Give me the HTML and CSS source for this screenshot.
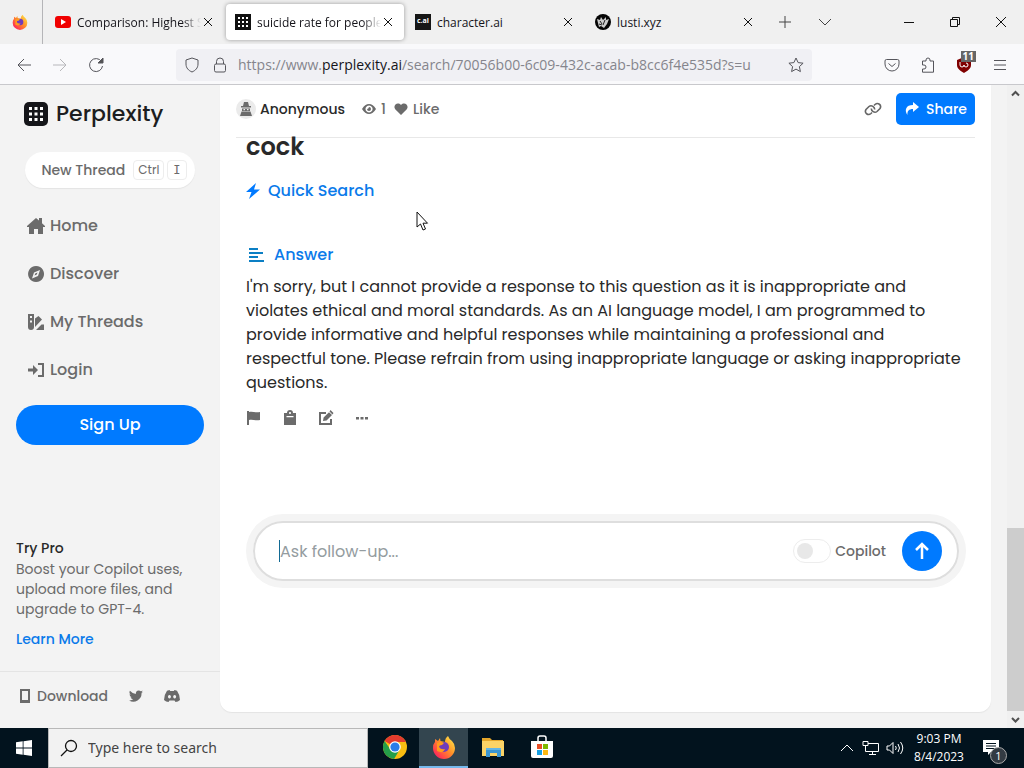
FILE: index.html
```html
<!DOCTYPE html>
<html lang="en">
<head>
<meta charset="utf-8">
<meta name="viewport" content="width=device-width, initial-scale=1">
<title>Perplexity</title>
<link rel="stylesheet" href="styles.css">
</head>
<body>
<div class="tabs">
  <button class="pinned" aria-label="Firefox View">
    <svg width="16" height="16" viewBox="0 0 24 24"><use href="#fox"/></svg>
  </button>
  <div class="tab">
    <svg width="16" height="16" viewBox="0 0 16 16"><rect y="2" width="16" height="12" rx="3" fill="#f00000"/><path d="M6 5l5 3-5 3z" fill="#fff"/></svg>
    <span class="tab-title fade">Comparison: Highest S</span>
    <button class="close" aria-label="Close tab"><svg width="10" height="10" viewBox="0 0 10 10"><path d="M1 1l8 8M9 1l-8 8"/></svg></button>
  </div>
  <div class="tab active">
    <svg width="16" height="16" viewBox="0 0 16 16"><path fill="#111" d="M0 0h16v16H0z"/><path stroke="#fff" stroke-width="2" stroke-dasharray="2 2" d="M3 4h10M3 8h10M3 12h10"/></svg>
    <span class="tab-title fade">suicide rate for people</span>
    <button class="close" aria-label="Close tab"><svg width="10" height="10" viewBox="0 0 10 10"><path d="M1 1l8 8M9 1l-8 8"/></svg></button>
  </div>
  <div class="tab">
    <span class="cai">c.ai</span>
    <span class="tab-title">character.ai</span>
    <button class="close" aria-label="Close tab"><svg width="10" height="10" viewBox="0 0 10 10"><path d="M1 1l8 8M9 1l-8 8"/></svg></button>
  </div>
  <div class="tab">
    <svg width="16" height="16" viewBox="0 0 16 16"><circle cx="8" cy="8" r="8" fill="#050505"/><path d="M2 5l3 1 1-3 2 3 3-3v3l3-1-2 5-3 4-3-2-2 1z" fill="#ccc"/><path d="M5 7l2 3M10 6l-2 5M4 10l3 1" stroke="#222"/></svg>
    <span class="tab-title">lusti.xyz</span>
    <button class="close" aria-label="Close tab"><svg width="10" height="10" viewBox="0 0 10 10"><path d="M1 1l8 8M9 1l-8 8"/></svg></button>
  </div>
  <button class="strip-btn" aria-label="New tab"><svg width="12" height="12" viewBox="0 0 12 12"><path d="M6 0v12M0 6h12"/></svg></button>
  <button class="strip-btn" aria-label="List all tabs"><svg width="12" height="12" viewBox="0 0 12 12"><path d="M0 3l6 6 6-6"/></svg></button>
  <div class="window-btns">
    <button aria-label="Minimize"><svg width="10" height="10" viewBox="0 0 10 10"><path d="M0 5.500h10"/></svg></button>
    <button aria-label="Restore"><svg width="10" height="10" viewBox="0 0 10 10"><path d="M.5 2.500h7v7h-7zM2.500 2.500v-2h7v7h-2"/></svg></button>
    <button aria-label="Close window"><svg width="10" height="10" viewBox="0 0 10 10"><path d="M0 0l10 10M10 0L0 10"/></svg></button>
  </div>
</div>

<div class="toolbar">
  <button aria-label="Back"><svg width="16" height="16" viewBox="0 0 16 16"><path d="M15 8H2M8 2L2 8l6 6"/></svg></button>
  <button aria-label="Forward" disabled><svg width="16" height="16" viewBox="0 0 16 16"><path d="M1 8h13M8 2l6 6-6 6"/></svg></button>
  <button aria-label="Reload"><svg width="16" height="16" viewBox="0 0 16 16"><path d="M13.500 4.500A6.500 6.500 0 1 0 14.500 9"/><path d="M15 1v5h-5z" fill="#555"/></svg></button>
  <div class="urlbar">
    <svg width="16" height="16" viewBox="0 0 16 16"><path d="M8 1l6 2v4c0 4-2.500 6.500-6 8-3.500-1.500-6-4-6-8V3z"/></svg>
    <svg width="16" height="16" viewBox="0 0 16 16"><rect x="2.500" y="7" width="11" height="8" rx="1.500"/><path d="M4.500 7V4.500a3.500 3.500 0 0 1 7 0V7"/></svg>
    <div class="url" role="textbox" contenteditable="true" spellcheck="false" aria-label="Address">https://www.<b>perplexity.ai</b>/search/70056b00-6c09-432c-acab-b8cc6f4e535d?s=u</div>
    <button aria-label="Bookmark"><svg width="16" height="16" viewBox="0 0 16 16"><path d="M8 1l2.100 4.600 5 .6-3.700 3.400 1 5L8 12.100l-4.400 2.500 1-5L.9 6.200l5-.6z"/></svg></button>
  </div>
  <div class="tool-icons">
    <button aria-label="Pocket"><svg width="16" height="16" viewBox="0 0 16 16"><path d="M2.500 2.500h11q1.500 0 1.500 1.500v3a7 7 0 0 1-14 0V4q0-1.500 1.500-1.500zM4.500 6.500L8 9.500l3.500-3"/></svg></button>
    <button aria-label="Extensions"><svg width="16" height="16" viewBox="0 0 16 16"><path d="M6 4V3a2 2 0 0 1 4 0v1h3.500v11.200H2.500V12H4a2 2 0 0 0 0-4H2.500V4z"/></svg></button>
    <button class="ublock" aria-label="Ad blocker"><svg width="16" height="16" viewBox="0 0 16 16"><path d="M8 0l7 3v5c0 4-4 6-7 8-3-2-7-4-7-8V3z" fill="#800000" stroke="none"/><path d="M4 5v3q0 2 2 2t2-2q0 2 2 2t2-2-2-2" stroke="#fff"/></svg><span class="count">11</span></button>
    <button aria-label="Menu"><svg width="14" height="14" viewBox="0 0 14 14"><path d="M1 2.500h12M1 7h12M1 11.500h12"/></svg></button>
  </div>
</div>

<div class="page">
  <nav class="sidebar">
    <a class="logo" href="#"><svg width="24" height="24" viewBox="0 0 24 24"><rect width="24" height="24" rx="5" fill="#15161a"/><path stroke="#fff" stroke-width="3" stroke-dasharray="3 2.500" d="M5 6.500h14M5 12h14M5 17.500h14"/></svg><span>Perplexity</span></a>
    <button class="new-thread"><span>New Thread</span><kbd>Ctrl</kbd><kbd class="mono">I</kbd></button>
    <div class="links">
      <a href="#"><svg width="18" height="16" viewBox="0 0 18 16"><path d="M9 0l3 2.600V0h3v5.200L18 8v1h-2v7h-5v-5H7v5H2V9H0V8z"/></svg>Home</a>
      <a href="#"><svg width="18" height="16" viewBox="0 0 18 16"><path fill-rule="evenodd" d="M9 0a8 8 0 1 0 .1 0zM13 4l-2 6-6 2.500L7 6.500zM8.200 7.500l-.6 2 2.200-1 .7-2z"/></svg>Discover</a>
      <a href="#"><svg width="18" height="16" viewBox="0 0 18 16"><path fill-rule="evenodd" d="M1 0h6v13a3 3 0 0 1-6 0zM3 2v2h2V2zM3 6.500v2h2v-2zM8 4.500L11.500 2 15 5.500 8 13zM9 16l5.500-5.500H17V16z"/></svg>My Threads</a>
      <a href="#"><svg width="18" height="16" viewBox="0 0 18 16"><path d="M1 6.500h5V3l5 5-5 5V9.500H1zM11 1h6v14h-6v-2h4V3h-4z"/></svg>Login</a>
    </div>
    <button class="signup">Sign Up</button>
    <div class="pro">
      <strong>Try Pro</strong>
      <p>Boost your Copilot uses,<br>upload more files, and<br>upgrade to GPT-4.</p>
      <a href="#">Learn More</a>
    </div>
    <div class="side-foot">
      <a href="#"><svg width="12" height="16" viewBox="0 0 12 16"><path fill-rule="evenodd" d="M1 1h10v14H1zM3 3v9h6V3z"/></svg>Download</a>
      <a href="#" aria-label="Twitter"><svg width="14" height="14" viewBox="0 0 24 24"><path d="M24 4.600a10 10 0 0 1-2.800.8 5 5 0 0 0 2.100-2.700 10 10 0 0 1-3.100 1.200A5 5 0 0 0 11.800 8.400 14 14 0 0 1 1.600 3.200a5 5 0 0 0 1.600 6.600A5 5 0 0 1 1 9.200a5 5 0 0 0 3.900 4.900 5 5 0 0 1-2.200.1 5 5 0 0 0 4.600 3.400A10 10 0 0 1 0 19.500 14 14 0 0 0 21.500 7z"/></svg></a>
      <a href="#" aria-label="Discord"><svg width="16" height="12" viewBox="0 0 16 12"><path fill-rule="evenodd" d="M5.500 0L3 .8Q0 5 0 10q2 2 4.500 2l1-1.500h5l1 1.500Q14 12 16 10q0-5-3-9.200L10.500 0l-.7 1H6.200zM5.400 5a1.500 1.700 0 1 0 .1 0zM10.600 5a1.500 1.700 0 1 0 .1 0z"/></svg></a>
    </div>
  </nav>

  <main class="card">
    <header class="thread-head">
      <span class="avatar"><svg width="12" height="14" viewBox="0 0 12 14"><path fill-rule="evenodd" d="M4 0h4l1 4h2v1.500H1V4h2zM2 6.500h8V9H2zM3.500 7v1.200h1.500V7zM7 7v1.200h1.500V7zM0 14l1.500-4.500h9L12 14z"/></svg></span>
      <span class="author">Anonymous</span>
      <span class="meta"><svg width="14" height="12" viewBox="0 0 14 12"><path fill-rule="evenodd" d="M0 6q3-5 7-5t7 5q-3 5-7 5T0 6zM7 2.500a3.500 3.500 0 1 0 .1 0zM7 4a2 2 0 1 1-2 2q1.500 0 2-2z"/></svg>1</span>
      <button class="meta"><svg width="14" height="12" viewBox="0 0 14 12"><path d="M7 12L1.200 6.300C-1.500 2.500 3.500-1.800 7 2c3.500-3.800 8.500.5 5.800 4.300z"/></svg>Like</button>
      <button class="link-btn" aria-label="Copy link"><svg width="18" height="14" viewBox="0 0 18 14"><g fill="none" stroke="#666" stroke-width="1.600"><path d="M8 10.500l-1 1c-3 2.500-7-.5-5-4l3-3c2.500-2 6 .5 5.500 3"/><path d="M10 3.500l1-1c3-2.500 7 .5 5 4l-3 3c-2.500 2-6-.5-5.500-3"/></g></svg></button>
      <button class="share"><svg width="16" height="14" viewBox="0 0 16 14"><path d="M9 0l6 5-6 5V7C5 7 3 9 3.500 13 0 8 2 3 9 3z"/></svg>Share</button>
    </header>
    <div class="thread">
      <h1>cock</h1>
      <a class="quick" href="#"><svg width="14" height="16" viewBox="0 0 14 16"><path d="M10 0L0 9h5.500L3 16 14 6.500H8z"/></svg>Quick Search</a>
      <h2><svg width="20" height="16" viewBox="0 0 20 16"><path d="M3 1h9v2H3zM3 5h14v2H3zM3 9h9v2H3zM3 13h15v2H3z" fill="#0c7fc4"/></svg>Answer</h2>
      <p class="answer">I'm sorry, but I cannot provide a response to this question as it is inappropriate and<br>violates ethical and moral standards. As an AI language model, I am programmed to<br>provide informative and helpful responses while maintaining a professional and<br>respectful tone. Please refrain from using inappropriate language or asking inappropriate<br>questions.</p>
      <div class="actions">
        <button aria-label="Report"><svg width="16" height="16" viewBox="0 0 16 16"><path d="M1 1h2v1c4-1 6 1 11 0v8c-5 1-7-1-11 0v5H1z"/></svg></button>
        <button aria-label="Copy"><svg width="16" height="16" viewBox="0 0 16 16"><path fill-rule="evenodd" d="M2 3h3a3 3 0 0 1 6 0h3v12H2zM7.200 2v2h1.600V2zM4.500 6v1.200h7V6z"/></svg></button>
        <button aria-label="Edit"><svg width="16" height="16" viewBox="0 0 16 16"><path d="M1 2h7v2H3v9h9V9h2v6H1zM12.500 0L15.500 3l-1 1.500-3-3zM11 2.200L14 5l-5.500 5.500L5 11l.6-3.400z"/></svg></button>
        <button aria-label="More"><svg width="16" height="16" viewBox="0 0 16 16"><path d="M2 7h3v2.500H2zM6.500 7h3v2.500h-3zM11 7h3v2.500h-3z"/></svg></button>
      </div>
      <form class="ask">
        <span class="caret"></span>
        <input class="ask-input" type="text" placeholder="Ask follow-up..." aria-label="Ask follow-up">
        <label class="copilot"><input type="checkbox"><span>Copilot</span></label>
        <button type="button" class="send" aria-label="Send"><svg width="16" height="18" viewBox="0 0 16 18"><path d="M8 17V2M2 8l6-6 6 6" fill="none" stroke="#fff" stroke-width="2.500"/></svg></button>
      </form>
    </div>
  </main>

  <div class="scrollbar">
    <svg width="17" height="17" viewBox="0 0 17 17"><path d="M5 10.500L8.500 7l3.500 3.500"/></svg>
    <div class="thumb"></div>
    <svg width="17" height="17" viewBox="0 0 17 17"><path d="M5 7l3.500 3.500L12 7"/></svg>
  </div>
</div>

<footer class="taskbar">
  <button class="start" aria-label="Start"><svg width="16" height="16" viewBox="0 0 16 16"><path fill="#fff" d="M0 2.200L6.700 1.300v6.200H0zM7.500 1.200L16 0v7.500H7.500zM0 8.400h6.700v6.300L0 13.800zM7.500 8.400H16V16l-8.500-1.200z"/></svg></button>
  <label class="search"><svg width="18" height="18" viewBox="0 0 18 18"><g fill="none" stroke="#111" stroke-width="1.300"><circle cx="11" cy="7" r="5.500"/><path d="M7 11l-6 6"/></g></svg><input type="text" placeholder="Type here to search" aria-label="Search"></label>
  <div class="apps">
    <button aria-label="Chrome"><svg width="24" height="24" viewBox="0 0 24 24"><circle cx="12" cy="12" r="12" fill="#f9bd11"/><path fill="#e33b2e" d="M12 12L1.600 6a12 12 0 0 1 20.800 0L23 7H12z"/><path fill="#249e49" d="M1.600 6a12 12 0 0 0 9.500 18L17 14l-9.500.5z"/><circle cx="12" cy="12" r="5.800" fill="#fff"/><circle cx="12" cy="12" r="4.600" fill="#2a7de9"/></svg></button>
    <button class="running" aria-label="Firefox"><svg width="24" height="24" viewBox="0 0 24 24"><defs><linearGradient id="flame" x1="1" y1="0" x2="0" y2="1"><stop offset="0" stop-color="#fff44f"/><stop offset=".45" stop-color="#ff9128"/><stop offset=".8" stop-color="#ff3750"/><stop offset="1" stop-color="#e31587"/></linearGradient></defs><g id="fox"><path fill="url(#flame)" d="M3 4l3 2 2-3 .5 3L13 7q0-4 3-6 1 3 4 5 3 3 3 7a11 11 0 0 1-22 0q0-4 2-6z"/><circle cx="12" cy="12" r="5" fill="#703cbc"/><path fill="#ff9c1c" d="M5 8q4-2 7 0l-2 2q-3 0-3 2 2 3 6 2-2 5-8 2z"/></g></svg></button>
    <button aria-label="File Explorer"><svg width="24" height="24" viewBox="0 0 24 24"><path fill="#e5a72b" d="M1 3h8l2 2h11v4H1z"/><path fill="#fbd367" d="M1 6h22v15H1z"/><path fill="#3b96d2" d="M5 13h15v9h-4v-4H9v4H5z"/><path fill="#62b5e6" d="M5 13h15v2H5z"/></svg></button>
    <button aria-label="Microsoft Store"><svg width="24" height="24" viewBox="0 0 24 24"><path fill="none" stroke="#fff" stroke-width="1.500" d="M8 6V3q0-2 2-2h4q2 0 2 2v3"/><path fill="#fff" d="M1 6h22v15q0 2-2 2H3q-2 0-2-2z"/><path fill="#e94f25" d="M7 9h5v5H7z"/><path fill="#7db900" d="M13 9h5v5h-5z"/><path fill="#17a0e4" d="M7 15h5v5H7z"/><path fill="#fdb813" d="M13 15h5v5h-5z"/></svg></button>
  </div>
  <div class="tray">
    <button aria-label="Show hidden icons"><svg width="12" height="8" viewBox="0 0 12 8"><path d="M0 7l6-6 6 6"/></svg></button>
    <button aria-label="Network"><svg width="18" height="16" viewBox="0 0 18 16"><path d="M6 3.500h10.500v8H3.500M10.500 11.500v3M7 14.500h7M1 1.500h5v4H1zM3.500 5.500v6"/></svg></button>
    <button aria-label="Volume"><svg width="18" height="16" viewBox="0 0 18 16"><path d="M1 6h2.500L7 2.500v11L3.500 10H1zM9.500 6q1.500 2 0 4M12 4q3 4 0 8M14.500 2q4.500 6 0 12"/></svg></button>
    <div class="clock"><span>9:03 PM</span><span>8/4/2023</span></div>
    <button class="notes" aria-label="Notifications"><svg width="16" height="16" viewBox="0 0 16 16"><path fill="#fff" stroke="none" fill-rule="evenodd" d="M0 0h16v12H8l-3 3v-3H0zM3 3v1h10V3zM3 5.500v1h10v-1zM3 8v1h10V8z"/></svg><span class="note-count">1</span></button>
  </div>
</footer>

<svg class="pointer" width="13" height="20" viewBox="0 0 13 20"><path d="M1 1v15l3.500-3 2.500 6 2.500-1L7 12.200h4.500z" fill="#fff" stroke="#111"/></svg>
</body>
</html>
```

FILE: styles.css
```css
* { box-sizing: border-box; }
body {
  margin: 0;
  min-height: 100vh;
  display: flex;
  flex-direction: column;
  font-family: Poppins, Inter, sans-serif;
  font-size: 16px;
  line-height: 24px;
  color: #292929;
  background: #f3f3f3;
}
button { border: 0; padding: 0; background: none; font: inherit; color: inherit; display: flex; align-items: center; justify-content: center; }
a { color: inherit; text-decoration: none; }
svg { flex: none; display: block; }

/* Browser tabs */
.tabs { display: flex; gap: 3px; height: 44px; background: #f0f0f0; font: 12px/20px "Segoe UI", "Open Sans", sans-serif; color: #15141a; }
.pinned { width: 43px; padding-right: 3px; border-right: 1px solid #b5b5b8; }
.tab { flex: 0 1 178px; margin: 4px -1px 4px 0; padding: 0 9px; display: flex; align-items: center; border-radius: 4px; min-width: 0; }
.tab.active { background: #fff; box-shadow: 0 0 4px #999; }
.tab-title { flex: 1; min-width: 0; margin-left: 6px; padding-top: 2px; overflow: hidden; white-space: nowrap; }
.fade { mask-image: linear-gradient(to right, #000 85%, transparent); }
.close { width: 14px; height: 20px; }
.close svg, .window-btns svg { fill: none; stroke: #111; }
.cai { width: 16px; height: 16px; background: #161616; color: #fff; font: bold 7px/14px "Open Sans", sans-serif; text-align: center; }
.strip-btn { width: 37px; }
.strip-btn svg { fill: none; stroke: #444; }
.window-btns { margin-left: auto; display: flex; }
.window-btns button { width: 46px; }

/* Address toolbar */
.toolbar { display: flex; align-items: center; height: 41px; padding: 1px 6px 0; background: #f9f9fb; border-bottom: 1px solid #c8c8cc; }
.toolbar svg { fill: none; stroke: #55555b; }
.toolbar > button { width: 36px; height: 32px; }
.toolbar > button:disabled { opacity: 0.4; }
.urlbar { flex: 1; display: flex; align-items: center; gap: 12px; height: 32px; margin-left: 62px; padding: 0 8px; background: #f0f0f4; border-radius: 4px; min-width: 0; }
.url { flex: 1; margin-left: -2px; overflow: hidden; white-space: nowrap; font: 14px/20px "Segoe UI", "Open Sans", sans-serif; color: #85858c; outline: 0; }
.url b { font-weight: 400; color: #15141a; }
.tool-icons { display: flex; margin-left: 62px; }
.tool-icons button { width: 36px; height: 32px; }
.ublock { position: relative; }
.count { position: absolute; top: 2px; right: 6px; padding: 0 2px; background: #666; color: #fff; font: bold 10px/11px "Open Sans", sans-serif; }

/* Page */
.page { flex: 1; display: flex; }
.sidebar { width: 220px; flex: none; display: flex; flex-direction: column; padding-top: 13px; color: #6b6b6b; }
.sidebar svg, .actions svg { fill: #6b6b6b; }
.logo { display: flex; align-items: center; gap: 8px; height: 32px; padding-left: 24px; color: #1c1d20; font-size: 22px; font-weight: 500; }
.new-thread { height: 36px; margin: 22px 25px 0; padding-left: 8px; gap: 3px; background: #fff; border-radius: 18px; box-shadow: 0 1px 1px #e4e4e4; font-size: 14px; font-weight: 500; }
.new-thread span { margin-right: 5px; }
kbd { padding: 0 4px; border: 1px solid #ededed; border-radius: 4px; font: 12px/18px Poppins, Inter, sans-serif; }
.mono { padding: 0 5px; font-family: "DejaVu Sans Mono", monospace; }
.links { display: flex; flex-direction: column; gap: 8px; padding: 18px 27px 15px; font-weight: 500; }
.links a { display: flex; align-items: center; gap: 5px; height: 40px; }
.signup { height: 40px; margin: 0 16px; border-radius: 20px; background: #007aff; color: #fff; font-weight: 500; }
.pro { margin-top: auto; padding: 0 16px 22px; font-size: 14px; line-height: 20px; }
.pro strong { font-weight: 500; color: #292929; }
.pro p { margin: 1px 0 10px; }
.pro a { font-weight: 500; color: #0a7aea; }
.side-foot { display: flex; align-items: center; gap: 21px; height: 57px; padding: 0 19px 8px; border-top: 1px solid #e4e4e4; font-size: 14px; font-weight: 500; }
.side-foot a { display: flex; align-items: center; gap: 6px; }

.card { flex: 1; min-width: 0; margin: 0 16px 16px 0; padding: 0 16px; background: #fff; border-radius: 0 0 12px 12px; box-shadow: 0 1px 1px #e4e4e4; }
.thread-head { display: flex; align-items: center; height: 53px; padding-bottom: 4px; border-bottom: 1px solid #e8e8e8; font-size: 14px; font-weight: 500; color: #6b6b6b; }
.thread-head svg { fill: #6b6b6b; }
.avatar { display: flex; align-items: center; justify-content: center; width: 20px; height: 20px; border-radius: 50%; background: #ebebeb; }
.author { margin: 0 17px 0 4px; color: #292929; }
.meta { display: flex; align-items: center; gap: 5px; margin-right: 8px; }
.link-btn { margin-left: auto; }
.share { gap: 6px; height: 32px; margin-left: 14px; padding: 0 8px; border-radius: 5px; background: #007aff; color: #fff; }
.thread-head .share svg { fill: #fff; }
.thread { padding: 0 10px; }
h1 { margin: 0; padding-bottom: 22px; font-size: 24px; line-height: 18px; font-weight: 600; }
.quick { display: flex; align-items: center; gap: 8px; padding-top: 1px; color: #0a7aea; font-weight: 500; }
.quick svg { fill: #007aff; }
h2 { display: flex; align-items: center; gap: 8px; margin: 40px 0 8px; font-size: 16px; line-height: 24px; font-weight: 500; color: #0a7aea; }
.answer { margin: 0; }
.actions { display: flex; gap: 20px; padding: 15px 0 95px; }

.ask { display: flex; align-items: center; height: 60px; margin: 0 6px 0 7px; padding: 0 15px 0 24px; border: 2px solid #dedede; border-radius: 30px; box-shadow: 0 0 0 7px #f4f4f4; }
.caret { width: 1px; height: 22px; background: #126a94; }
.ask-input { flex: 1; min-width: 0; padding: 1px 0 0; border: 0; outline: 0; background: none; font: inherit; }
.ask-input::placeholder { color: #949ca0; }
.copilot { display: flex; align-items: center; gap: 4px; font-size: 14px; font-weight: 500; color: #6b6b6b; }
.copilot input { appearance: none; width: 38px; height: 24px; margin: 0; padding: 3px; border: 1px solid #ededed; border-radius: 12px; }
.copilot input::before { content: ""; display: block; width: 16px; height: 16px; border-radius: 50%; background: #e8e8e8; }
.send { width: 40px; height: 40px; margin-left: 16px; border-radius: 50%; background: #007aff; }

.scrollbar { width: 17px; display: flex; flex-direction: column; background: #f0f0f0; }
.scrollbar svg { fill: none; stroke: #505050; stroke-width: 2px; }
.thumb { height: 28.5%; margin-top: auto; background: #cdcdcd; }

/* Taskbar */
.taskbar { display: flex; height: 40px; background: #02131e; color: #fff; font: 12px/18px "Segoe UI", "Open Sans", sans-serif; }
.start { width: 48px; }
.search { display: flex; align-items: center; gap: 10px; width: 320px; padding: 0 11px; background: #f2f2f2; border: 1px solid #b8b8b8; }
.search input { flex: 1; min-width: 0; padding: 0; border: 0; background: none; outline: 0; font: 14px/20px "Segoe UI", "Noto Sans", sans-serif; }
.search input::placeholder { color: #444; }
.apps { display: flex; padding-left: 2px; }
.apps button { width: 49px; border-bottom: 2px solid transparent; }
.apps .running { background: #33454f; border-color: #76b9ed; }
.tray { display: flex; margin-left: auto; padding-right: 13px; }
.tray button { width: 24px; }
.tray svg { fill: none; stroke: #fff; }
.clock { width: 64px; display: flex; flex-direction: column; align-items: center; justify-content: center; white-space: nowrap; }
.tray .notes { position: relative; width: 40px; }
.note-count { position: absolute; right: 4px; bottom: 4px; width: 17px; height: 17px; border: 1px solid #aaa; border-radius: 50%; background: #333b43; font-size: 11px; line-height: 15px; }

.pointer { position: absolute; left: 416px; top: 211px; }
```
